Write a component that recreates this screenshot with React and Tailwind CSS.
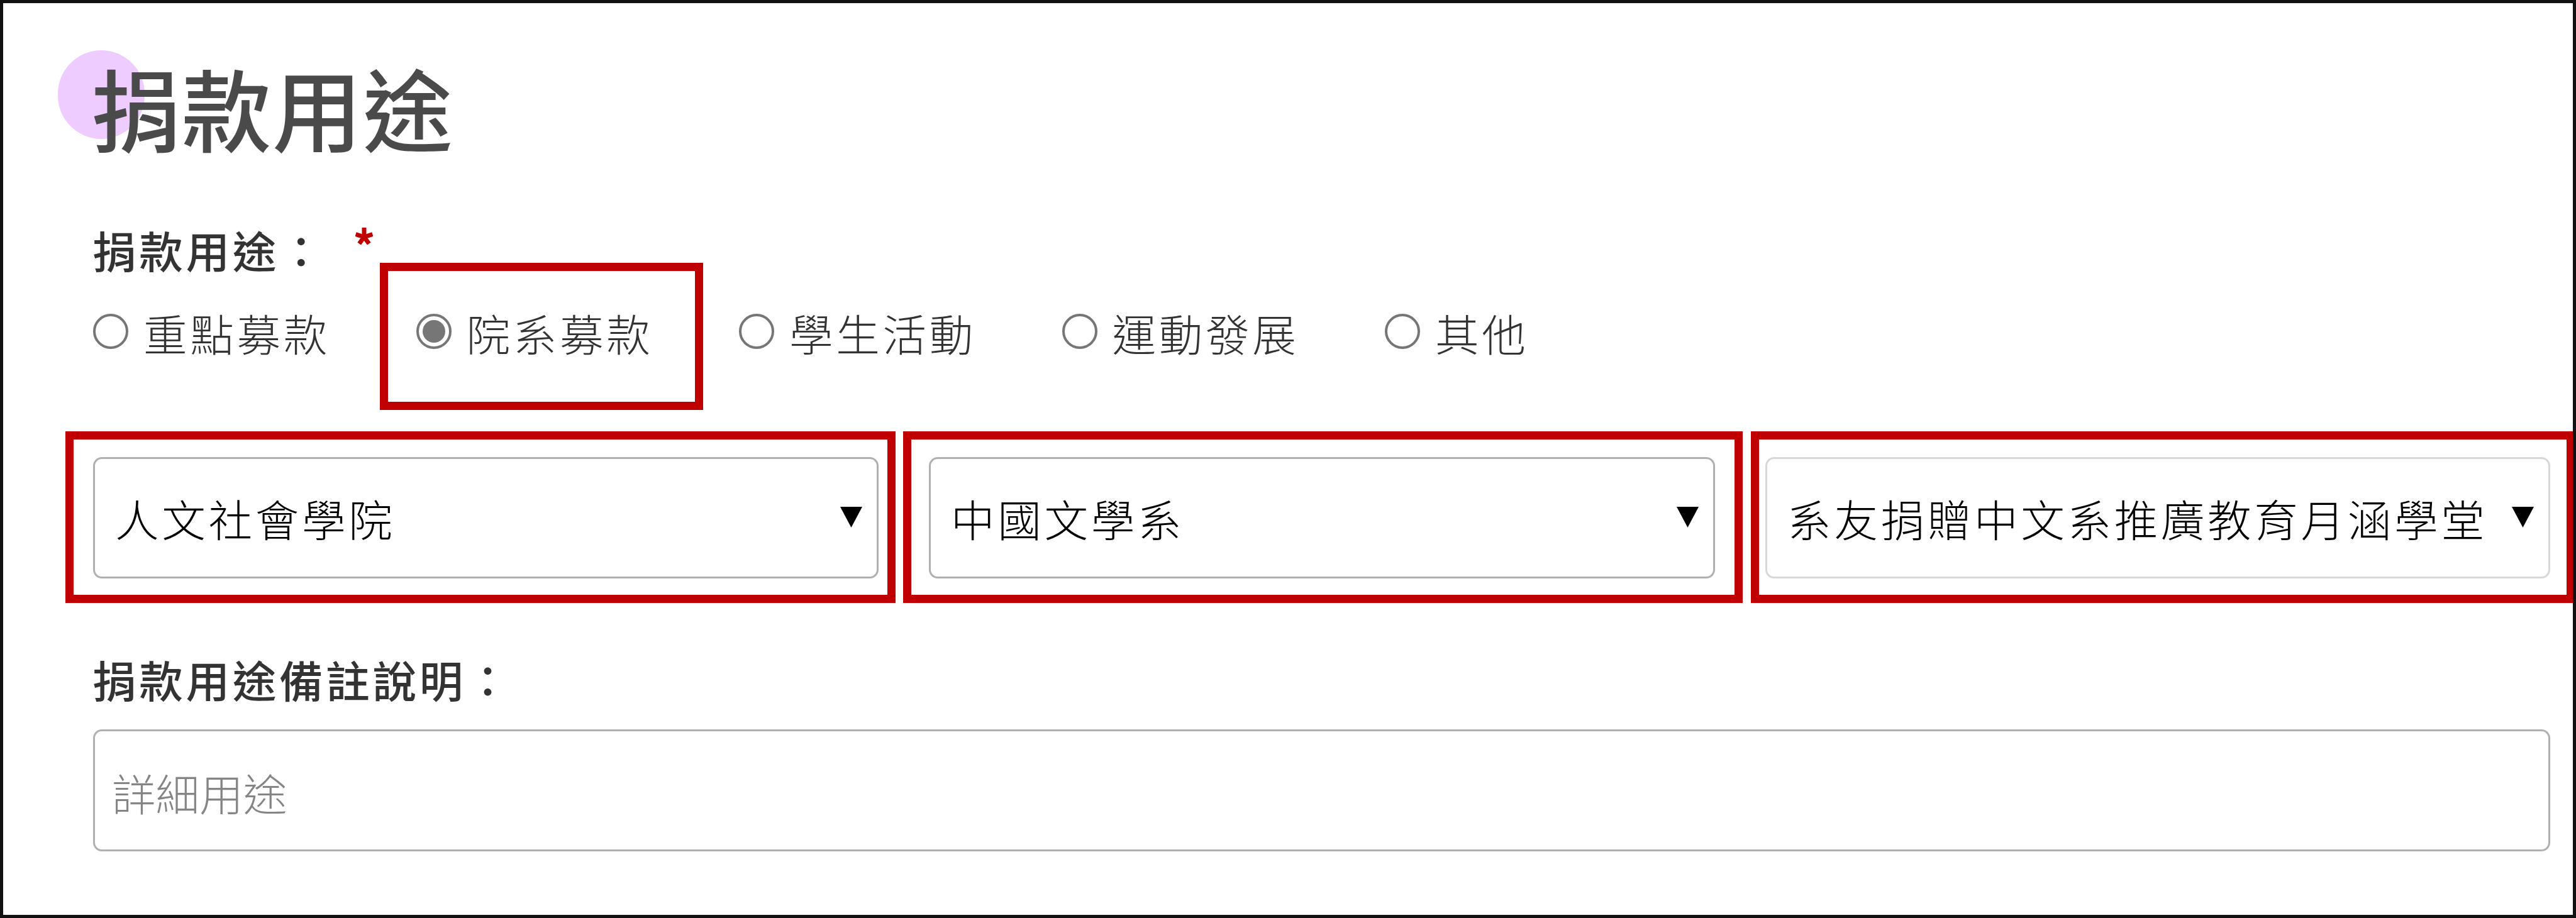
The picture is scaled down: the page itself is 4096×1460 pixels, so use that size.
const FONT = "font-['Noto_Sans_CJK_TC','Noto_Sans_CJK_JP',sans-serif]";

function Label({ children, required }) {
  return (
    <div className="flex h-[80px] items-center text-[69.6px] leading-[80px] font-medium tracking-[4.64px] text-[#333]">
      <span className="mt-[-6px] ml-[-1px]">{children}</span>
      {required && (
        <svg className="mt-[-49px] ml-[47px] h-[27px] w-[28px]" viewBox="0 0 28 27" stroke="#c00000" strokeWidth="7">
          <path d="M14 15V0M14 15L0.6 10.6M14 15L27.4 10.6M14 15L6.2 25.6M14 15L21.8 25.6" />
        </svg>
      )}
    </div>
  );
}

function Radio({ children, checked }) {
  return (
    <label className="flex w-[513.5px] items-center">
      <span className="flex h-[56px] w-[56px] items-center justify-center rounded-full border-[4px] border-[#767676] bg-white">
        {checked && <span className="h-[36px] w-[36px] rounded-full bg-[#767676]" />}
      </span>
      <span className="relative top-[2px] ml-[24px] text-[69.6px] leading-[80px] font-light tracking-[4.64px] text-[#333]">
        {children}
      </span>
    </label>
  );
}

function Select({ children, className }) {
  return (
    <div className={`flex h-[193px] items-center justify-between rounded-[14px] border-[3px] bg-white pl-[32px] ${className}`}>
      <span className="text-[69.6px] leading-[80px] font-light tracking-[4.64px] whitespace-nowrap text-black">
        {children}
      </span>
      <svg className="mt-[-2px] mr-[23px] h-[33px] w-[35px] shrink-0" viewBox="0 0 36 33" preserveAspectRatio="none">
        <path d="M0 0H36L18 33Z" fill="#000" />
      </svg>
    </div>
  );
}

export default function App() {
  return (
    <div
      lang="zh-Hant"
      className={`relative h-[1460px] w-[4096px] overflow-hidden border-[5px] border-[#111] bg-white pt-[95px] pr-[36px] pl-[143px] ${FONT}`}
    >
      <div className="relative h-[153px]">
        <div className="absolute top-[-20px] left-[-56px] h-[141px] w-[138px] rounded-full bg-[#efccff]" />
        <h1 className="relative top-[-7px] left-[-3px] text-[142.4px] leading-[153px] font-medium tracking-[1.6px] text-[#4a4a4a]">
          捐款用途
        </h1>
      </div>

      <div className="mt-[107px]">
        <Label required>捐款用途：</Label>
      </div>

      <div className="mt-[47px] flex h-[80px] items-center">
        <Radio>重點募款</Radio>
        <Radio checked>院系募款</Radio>
        <Radio>學生活動</Radio>
        <Radio>運動發展</Radio>
        <Radio>其他</Radio>
      </div>

      <div className="mt-[160px] flex">
        <Select className="w-[1249px] border-[#b0b0b0]">人文社會學院</Select>
        <Select className="ml-[80px] w-[1250px] border-[#b0b0b0]">中國文學系</Select>
        <Select className="ml-[80px] w-[1248px] border-[#d8d8d8]">系友捐贈中文系推廣教育月涵學堂</Select>
      </div>

      <div className="mt-[123px]">
        <Label>捐款用途備註說明：</Label>
      </div>

      <div className="mt-[37px] flex h-[194px] items-center rounded-[14px] border-[3px] border-[#b0b0b0] pl-[27px] text-[69.6px] leading-[80px] font-light text-[#858585]">
        <span className="mt-[6px]">詳細用途</span>
      </div>

      {/* Red highlight frames */}
      <div className="absolute top-[413px] left-[599px] h-[234px] w-[514px] border-[13px] border-[#c00000]" />
      <div className="absolute top-[681px] left-[99px] h-[273px] w-[1320px] border-[13px] border-[#c00000]" />
      <div className="absolute top-[681px] left-[1431px] h-[273px] w-[1335px] border-[13px] border-[#c00000]" />
      <div className="absolute top-[681px] left-[2779px] h-[273px] w-[1310px] border-[13px] border-[#c00000]" />
    </div>
  );
}
